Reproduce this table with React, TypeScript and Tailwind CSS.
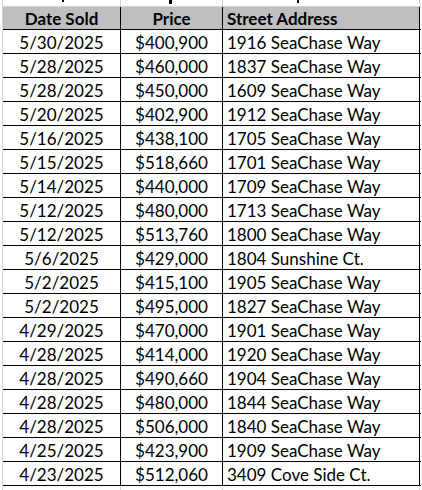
const rows: [string, string, string][] = [
  ["5/30/2025", "$400,900", "1916 SeaChase Way"],
  ["5/28/2025", "$460,000", "1837 SeaChase Way"],
  ["5/28/2025", "$450,000", "1609 SeaChase Way"],
  ["5/20/2025", "$402,900", "1912 SeaChase Way"],
  ["5/16/2025", "$438,100", "1705 SeaChase Way"],
  ["5/15/2025", "$518,660", "1701 SeaChase Way"],
  ["5/14/2025", "$440,000", "1709 SeaChase Way"],
  ["5/12/2025", "$480,000", "1713 SeaChase Way"],
  ["5/12/2025", "$513,760", "1800 SeaChase Way"],
  ["5/6/2025", "$429,000", "1804 Sunshine Ct."],
  ["5/2/2025", "$415,100", "1905 SeaChase Way"],
  ["5/2/2025", "$495,000", "1827 SeaChase Way"],
  ["4/29/2025", "$470,000", "1901 SeaChase Way"],
  ["4/28/2025", "$414,000", "1920 SeaChase Way"],
  ["4/28/2025", "$490,660", "1904 SeaChase Way"],
  ["4/28/2025", "$480,000", "1844 SeaChase Way"],
  ["4/28/2025", "$506,000", "1840 SeaChase Way"],
  ["4/25/2025", "$423,900", "1909 SeaChase Way"],
  ["4/23/2025", "$512,060", "3409 Cove Side Ct."],
];

const cols = "grid grid-cols-[117px_1px_101px_1px_196px_1px]";

export default function App() {
  return (
    <div
      className="w-[422px] h-[490px] bg-white overflow-hidden text-black flex"
      style={{ fontFamily: "Lato, 'Liberation Sans', sans-serif" }}
    >
      {/* left gridline */}
      <div className="w-[2px] shrink-0" />
      <div className="w-px shrink-0 bg-[#d4d4d4]" />

      <div className="flex flex-col">
        {/* clipped row above */}
        <div className={`${cols} h-[6px]`}>
          <div className="flex justify-center">
            <div className="ml-[3px] w-[2px] h-[2px] bg-black" />
          </div>
          <div className="bg-[#d4d4d4]" />
          <div className="flex justify-center">
            <div className="mr-[2px] w-[3px] h-[4px] bg-black" />
          </div>
          <div className="bg-[#d4d4d4]" />
          <div className="flex">
            <div className="ml-[74px] w-[2px] h-[3px] bg-black" />
          </div>
          <div className="bg-[#d4d4d4]" />
        </div>
        <div className="h-px bg-[#d4d4d4]" />

        {/* header */}
        <div className={`${cols} h-[22px] font-bold text-[17px] leading-[22px]`}>
          <div className="bg-[#bfbfbf] text-center pt-[1px]">Date Sold</div>
          <div className="bg-black" />
          <div className="bg-[#bfbfbf] text-center pt-[1px]">Price</div>
          <div className="bg-black" />
          <div className="bg-[#bfbfbf] pl-[4px] pt-[1px]">Street Address</div>
          <div className="bg-black" />
        </div>
        <div className="h-px bg-black w-[418px]" />

        {rows.map(([date, price, addr], i) => (
          <div key={i}>
            <div className={`${cols} h-[23px] text-[17px] leading-[23px]`}>
              <div className="text-center pt-[1px]">{date}</div>
              <div className="bg-black" />
              <div className="text-center pt-[1px]">{price}</div>
              <div className="bg-black" />
              <div className="pl-[4px] pt-[1px]">{addr}</div>
              <div className="bg-black" />
            </div>
            <div className="h-px bg-black w-[418px]" />
          </div>
        ))}

        {/* gridlines below table */}
        <div className={`${cols} flex-1`}>
          <div />
          <div className="bg-[#d4d4d4]" />
          <div />
          <div className="bg-[#d4d4d4]" />
          <div />
          <div className="bg-[#d4d4d4]" />
        </div>
      </div>

      <div className="w-px shrink-0" />
      <div className="w-px shrink-0 bg-[#d4d4d4]" />
    </div>
  );
}
